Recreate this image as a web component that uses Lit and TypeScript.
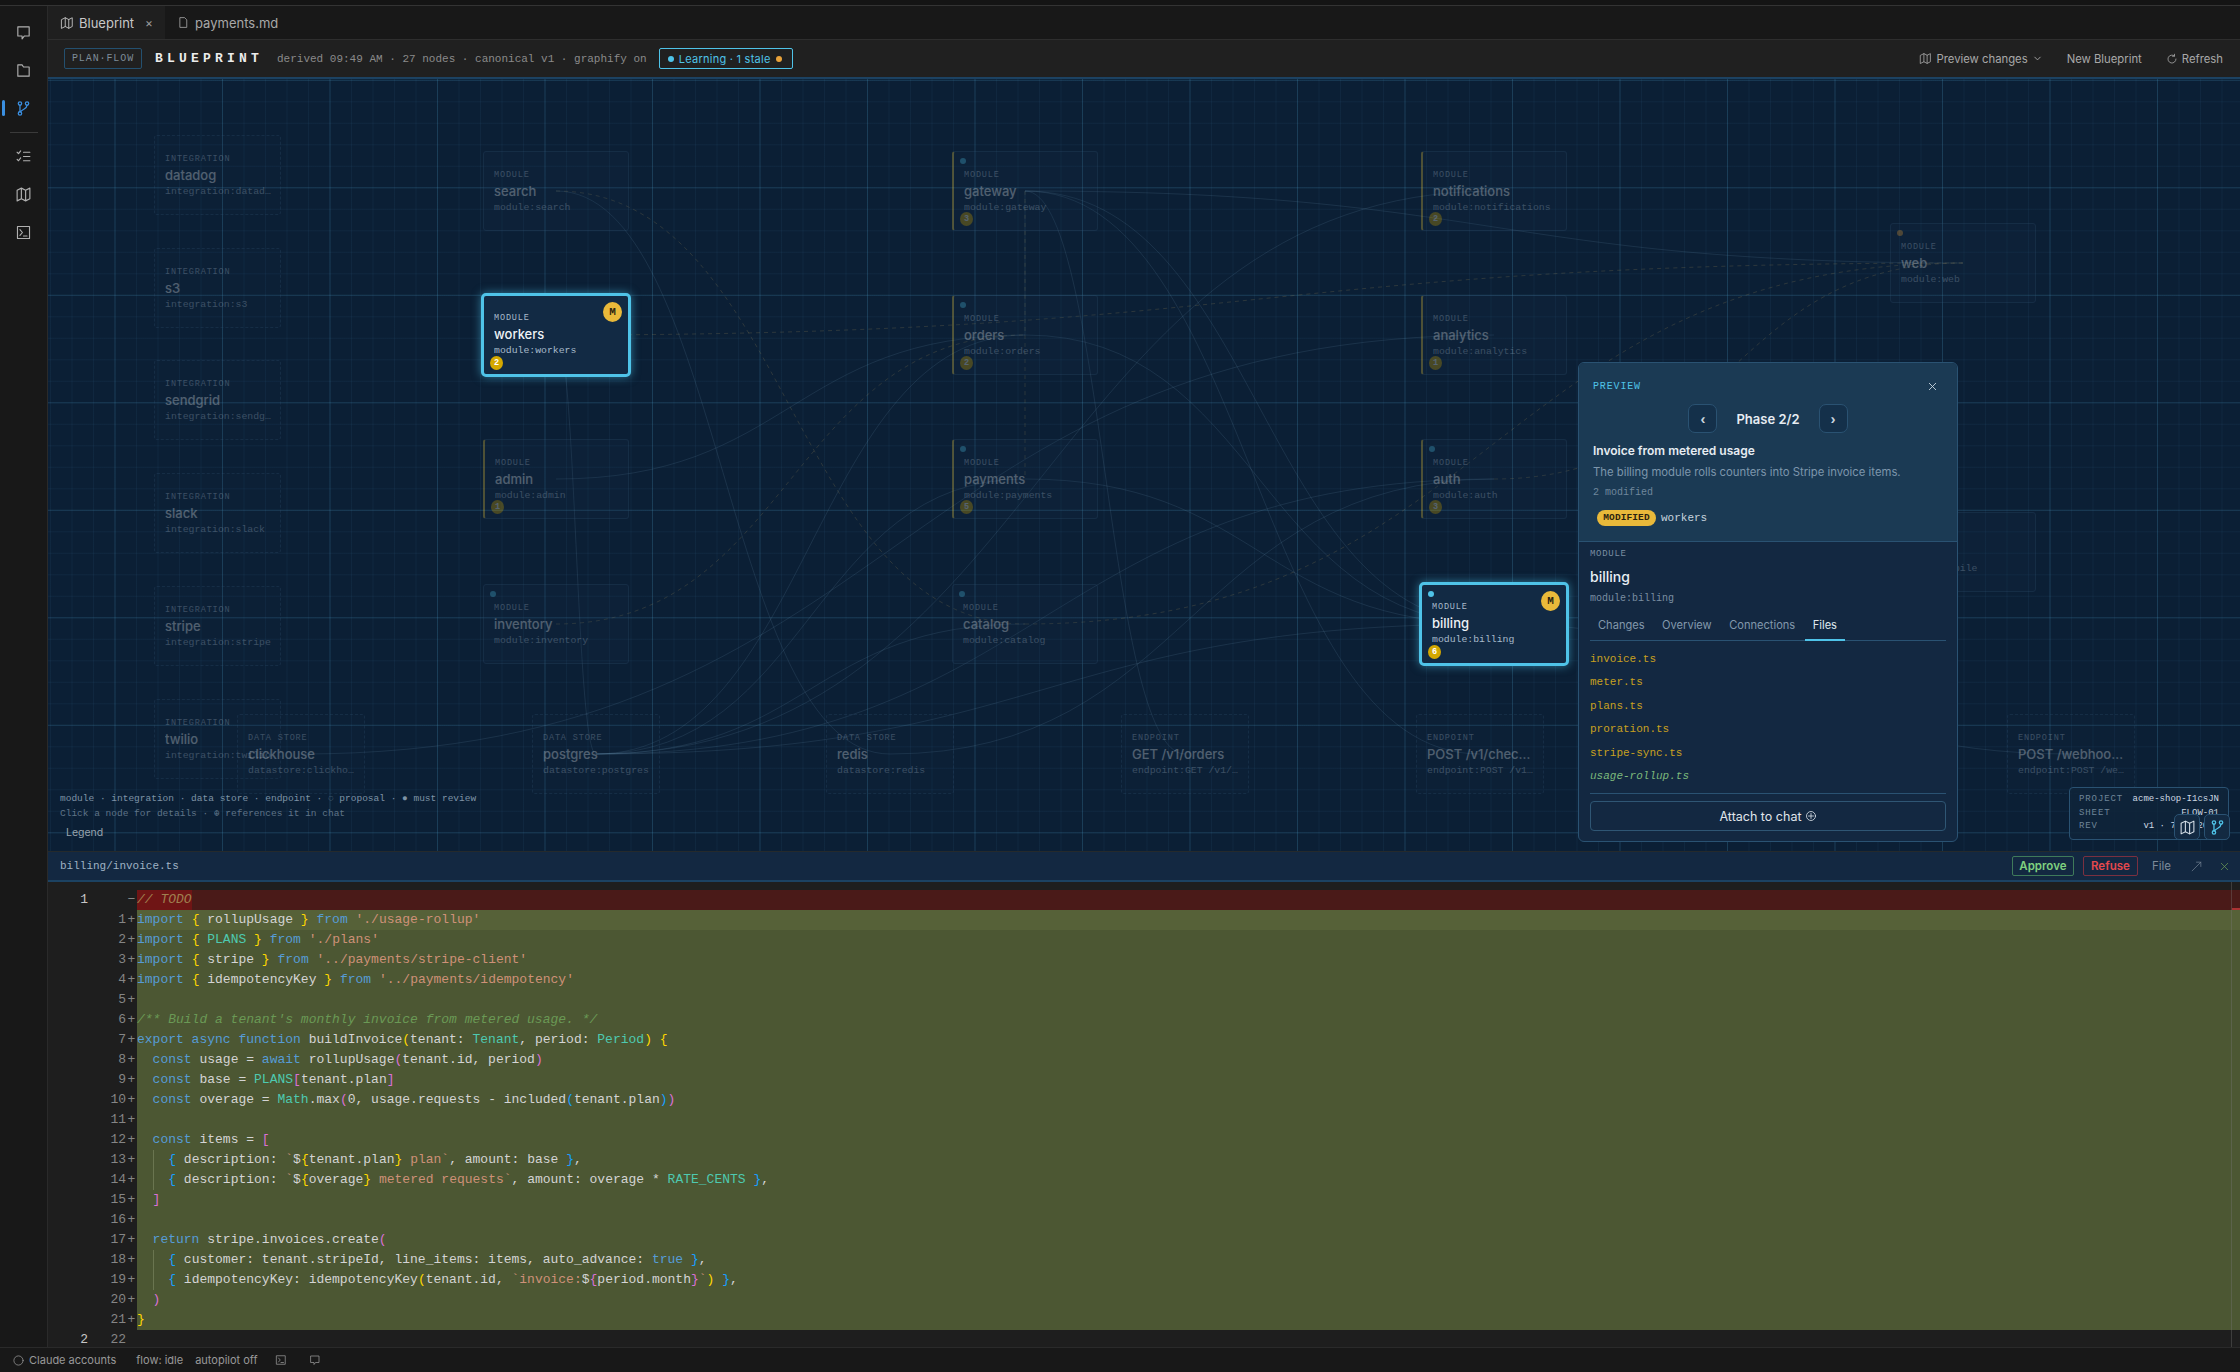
import { LitElement, html, css, svg, nothing } from "lit";
import { customElement } from "lit/decorators.js";

/** Canvas origin in page coordinates. */
const OX = 48;
const OY = 79;

type Kind = "module" | "integration" | "store" | "endpoint";

interface GraphNode {
  id: string;
  kind: Kind;
  x: number;
  y: number;
  name: string;
  ref: string;
  dot?: string;
  warn?: boolean;
  badge?: string;
  selected?: boolean;
}

const mod = (id: string, x: number, y: number, extra: Partial<GraphNode> = {}): GraphNode => ({
  id, kind: "module", x, y, name: id, ref: `module:${id}`, ...extra,
});
const integ = (id: string, y: number): GraphNode => ({
  id, kind: "integration", x: 154, y, name: id, ref: `integration:${id}`,
});
const store = (id: string, x: number): GraphNode => ({
  id, kind: "store", x, y: 714, name: id, ref: `datastore:${id}`,
});
const endpoint = (id: string, x: number, name: string): GraphNode => ({
  id, kind: "endpoint", x, y: 714, name, ref: `endpoint:${name}`,
});

const NODES: GraphNode[] = [
  integ("datadog", 135),
  integ("s3", 248),
  integ("sendgrid", 360),
  integ("slack", 473),
  integ("stripe", 586),
  integ("twilio", 699),
  mod("search", 483, 151),
  mod("workers", 483, 295, { selected: true, badge: "2", warn: false }),
  mod("admin", 483, 439, { warn: true, badge: "1" }),
  mod("inventory", 483, 584, { dot: "#4fc3e8" }),
  mod("gateway", 952, 151, { dot: "#4fc3e8", warn: true, badge: "3" }),
  mod("orders", 952, 295, { dot: "#4fc3e8", warn: true, badge: "2" }),
  mod("payments", 952, 439, { dot: "#4fc3e8", warn: true, badge: "5" }),
  mod("catalog", 952, 584, { dot: "#4fc3e8" }),
  mod("notifications", 1421, 151, { warn: true, badge: "2" }),
  mod("analytics", 1421, 295, { warn: true, badge: "1" }),
  mod("auth", 1421, 439, { dot: "#4fc3e8", warn: true, badge: "3" }),
  mod("billing", 1421, 584, { dot: "#4fc3e8", selected: true, badge: "6" }),
  mod("web", 1890, 223, { dot: "#e9a23a" }),
  mod("mobile", 1890, 512),
  store("clickhouse", 237),
  store("postgres", 532),
  store("redis", 826),
  endpoint("orders-get", 1121, "GET /v1/orders"),
  endpoint("checkout", 1416, "POST /v1/checkout"),
  endpoint("webhook", 2007, "POST /webhooks/stripe"),
];

/** from, to, dashed */
const EDGES: [string, string, boolean][] = [
  ["search", "redis", false],
  ["search", "catalog", true],
  ["workers", "web", true],
  ["workers", "postgres", false],
  ["admin", "orders", false],
  ["inventory", "orders", true],
  ["gateway", "orders", false],
  ["gateway", "payments", true],
  ["gateway", "web", false],
  ["gateway", "checkout", false],
  ["gateway", "orders-get", false],
  ["orders", "postgres", false],
  ["orders", "billing", false],
  ["payments", "postgres", false],
  ["payments", "billing", false],
  ["catalog", "postgres", false],
  ["catalog", "web", true],
  ["notifications", "postgres", false],
  ["analytics", "clickhouse", false],
  ["auth", "postgres", false],
  ["auth", "redis", false],
  ["billing", "postgres", false],
  ["billing", "webhook", false],
  ["billing", "gateway", false],
  ["auth", "web", true],
];

const nodeBox = (n: GraphNode) => ({
  w: n.kind === "module" ? 146 : n.kind === "integration" ? 127 : 128,
  h: 80,
});

const edgePath = (a: GraphNode, b: GraphNode) => {
  const x1 = a.x + nodeBox(a).w / 2 - OX;
  const y1 = a.y + 40 - OY;
  const x2 = b.x + nodeBox(b).w / 2 - OX;
  const y2 = b.y + 40 - OY;
  const mx = (x1 + x2) / 2;
  return `M${x1} ${y1}C${mx} ${y1} ${mx} ${y2} ${x2} ${y2}`;
};

const icons = {
  chat: svg`<path d="M4 4h16v13h-7l-3 4v-4H4z"/>`,
  folder: svg`<path d="M4 4h6l2 3h8v13H4z"/>`,
  branch: svg`<circle cx="7" cy="5" r="2.4"/><circle cx="17" cy="5" r="2.4"/><circle cx="7" cy="19" r="2.4"/><path d="M7 7.4v9.2M17 7.4c0 5-6 5-9.5 9.4"/>`,
  tasks: svg`<path d="m3 6 2 2 3-4M3 16l2 2 3-4M12 6h9M12 12h9M12 18h9"/>`,
  map: svg`<path d="M3 6l6-3 6 3 6-3v15l-6 3-6-3-6 3zM9 3v15M15 6v15"/>`,
  term: svg`<rect x="3.5" y="3.5" width="17" height="17"/><path d="m7 8 3.5 4L7 16M12 17h5"/>`,
  file: svg`<path d="M6 3h8l4 4v14H6z"/>`,
  down: svg`<path d="m6 9 6 6 6-6"/>`,
  refresh: svg`<path d="M20 12a8 8 0 1 1-3-6.2M17 2.5v4h-4"/>`,
  close: svg`<path d="M5 5l14 14M19 5 5 19"/>`,
  expand: svg`<path d="M4 20 20 4M12 4h8v8"/>`,
  plus: svg`<circle cx="12" cy="12" r="9"/><path d="M12 7v10M7 12h10"/>`,
  ring: svg`<circle cx="12" cy="12" r="8.5"/>`,
};

const icon = (name: keyof typeof icons, size = 16, stroke = 1.6) => html`<svg
  class="ic"
  width=${size}
  height=${size}
  viewBox="0 0 24 24"
  fill="none"
  stroke="currentColor"
  stroke-width=${stroke}
  stroke-linecap="round"
  stroke-linejoin="round"
>${icons[name]}</svg>`;

type Tok = string | [string, string];

const K = (t: string): Tok => ["k", t];
const S = (t: string): Tok => ["s", t];
const T = (t: string): Tok => ["t", t];
const Y = (t: string): Tok => ["y", t];
const P = (t: string): Tok => ["p", t];
const B = (t: string): Tok => ["b", t];
const D = (t: string): Tok => ["d", t];

/** Diff rows after the removed line. */
const ADDED: { toks: Tok[]; guide?: boolean }[] = [
  { toks: [K("import"), " ", Y("{"), " rollupUsage ", Y("}"), " ", K("from"), " ", S("'./usage-rollup'")] },
  { toks: [K("import"), " ", Y("{"), " ", T("PLANS"), " ", Y("}"), " ", K("from"), " ", S("'./plans'")] },
  { toks: [K("import"), " ", Y("{"), " stripe ", Y("}"), " ", K("from"), " ", S("'../payments/stripe-client'")] },
  { toks: [K("import"), " ", Y("{"), " idempotencyKey ", Y("}"), " ", K("from"), " ", S("'../payments/idempotency'")] },
  { toks: [] },
  { toks: [["c", "/** Build a tenant's monthly invoice from metered usage. */"]] },
  { toks: [K("export async function"), " buildInvoice", Y("("), "tenant: ", T("Tenant"), ", period: ", T("Period"), Y(")"), " ", Y("{")] },
  { toks: ["  ", K("const"), " usage = ", K("await"), " rollupUsage", P("("), "tenant.id, period", P(")")] },
  { toks: ["  ", K("const"), " base = ", T("PLANS"), P("["), "tenant.plan", P("]")] },
  { toks: ["  ", K("const"), " overage = ", T("Math"), ".max", P("("), "0, usage.requests - included", B("("), "tenant.plan", B(")"), P(")")] },
  { toks: [] },
  { toks: ["  ", K("const"), " items = ", P("[")] },
  { guide: true, toks: ["    ", B("{"), " description: ", S("`"), D("$"), Y("{"), "tenant.plan", Y("}"), " ", S("plan`"), ", amount: base ", B("}"), ","] },
  { guide: true, toks: ["    ", B("{"), " description: ", S("`"), D("$"), Y("{"), "overage", Y("}"), " ", S("metered requests`"), ", amount: overage * ", T("RATE_CENTS"), " ", B("}"), ","] },
  { toks: ["  ", P("]")] },
  { toks: [] },
  { toks: ["  ", K("return"), " stripe.invoices.create", P("(")] },
  { guide: true, toks: ["    ", B("{"), " customer: tenant.stripeId, line_items: items, auto_advance: ", K("true"), " ", B("}"), ","] },
  { guide: true, toks: ["    ", B("{"), " idempotencyKey: idempotencyKey", Y("("), "tenant.id, ", S("`invoice:"), D("$"), P("{"), "period.month", P("}"), S("`"), Y(")"), " ", B("}"), ","] },
  { toks: ["  ", P(")")] },
  { toks: [Y("}")] },
];

const FILES = ["invoice.ts", "meter.ts", "plans.ts", "proration.ts", "stripe-sync.ts"];

@customElement("app-root")
export class AppRoot extends LitElement {
  static styles = css`
    :host {
      display: grid;
      grid-template-columns: 48px 1fr;
      grid-template-rows: 6px 1fr 25px;
      width: 2240px;
      height: 1372px;
      overflow: hidden;
      background: #181818;
      color: #ccc;
      font-family: Inter, "Liberation Sans", sans-serif;
    }
    .ic {
      display: block;
      flex: none;
    }
    .mono {
      font-family: "Liberation Mono", "DejaVu Sans Mono", monospace;
    }

    .strip {
      grid-column: 1 / 3;
      background: #141414;
      border-bottom: 1px solid #333;
    }

    /* activity bar */
    .activity {
      display: flex;
      flex-direction: column;
      align-items: center;
      position: relative;
      border-right: 1px solid #2a2a2a;
      color: #b0b0b0;
      padding-top: 7px;
    }
    .activity .slot {
      height: 38px;
      display: flex;
      align-items: center;
      justify-content: center;
    }
    .activity .on {
      color: #3b8fe0;
    }
    .activity .bar {
      position: absolute;
      left: 2px;
      top: 94px;
      width: 3px;
      height: 16px;
      border-radius: 2px;
      background: #3b8fe0;
    }
    .activity hr {
      width: 28px;
      border: 0;
      border-top: 1px solid #3a3a3a;
      margin: 5px 0 4px;
    }

    .main {
      display: flex;
      flex-direction: column;
      min-width: 0;
      min-height: 0;
    }

    /* tabs */
    .tabs {
      height: 33px;
      flex: none;
      display: flex;
      background: #181818;
      border-bottom: 1px solid #2e2e2e;
      font-size: 13px;
      color: #a8a8a8;
    }
    .tab {
      display: flex;
      align-items: center;
      gap: 5px;
      padding: 0 11px 0 12px;
    }
    .tab.active {
      background: #1f1f1f;
      color: #c8c8c8;
      width: 117px;
      box-sizing: border-box;
    }
    .tab .x {
      margin-left: 6px;
      font-size: 12px;
      color: #999;
    }
    .tab.second {
      padding-left: 12px;
    }

    /* blueprint header */
    .head {
      height: 39px;
      flex: none;
      box-sizing: border-box;
      display: flex;
      align-items: center;
      background: #202020;
      border-bottom: 2px solid #1c4262;
      padding: 0 17px 0 16px;
    }
    .stamp {
      box-sizing: border-box;
      height: 21px;
      width: 78px;
      display: flex;
      align-items: center;
      justify-content: center;
      border: 1px solid #24506f;
      border-radius: 2px;
      font-size: 10px;
      letter-spacing: 0.9px;
      color: #7e8c98;
    }
    .title {
      margin-left: 13px;
      width: 122px;
      font-size: 13px;
      font-weight: 700;
      letter-spacing: 4.2px;
      color: #ececec;
    }
    .meta {
      font-size: 11px;
      color: #8a8a8a;
      white-space: pre;
    }
    .learning {
      margin-left: 12px;
      box-sizing: border-box;
      height: 21px;
      width: 134px;
      display: flex;
      align-items: center;
      justify-content: space-between;
      padding: 0 10px 0 8px;
      border: 1.5px solid #4fc3e8;
      border-radius: 2px;
      font-size: 11px;
      letter-spacing: 0.25px;
      color: #4fc3e8;
    }
    .learning i {
      width: 6px;
      height: 6px;
      border-radius: 50%;
      background: #4fc3e8;
    }
    .learning i.warn {
      background: #e9a23a;
    }
    .actions {
      margin-left: auto;
      display: flex;
      align-items: center;
      font-size: 11.3px;
      color: #a8a8a8;
    }
    .actions span {
      display: flex;
      align-items: center;
      gap: 4px;
    }
    .actions .gap {
      margin-left: 24px;
    }

    /* canvas */
    .canvas {
      position: relative;
      flex: none;
      height: 772px;
      overflow: hidden;
      background-color: #0b1f35;
      background-image: linear-gradient(rgba(80, 170, 210, 0.17) 1px, transparent 1px),
        linear-gradient(90deg, rgba(80, 170, 210, 0.17) 1px, transparent 1px),
        linear-gradient(rgba(80, 150, 200, 0.07) 1px, transparent 1px),
        linear-gradient(90deg, rgba(80, 150, 200, 0.07) 1px, transparent 1px);
      background-size: 107.5px 107.5px, 107.5px 107.5px, 21.5px 21.5px, 21.5px 21.5px;
      background-position: 66.5px 0.8px, 66.5px 0.8px, 66.5px 0.8px, 66.5px 0.8px;
    }
    .edges {
      position: absolute;
      inset: 0;
      width: 100%;
      height: 100%;
    }
    .edges path {
      fill: none;
      stroke: rgba(130, 175, 210, 0.13);
      stroke-width: 1;
    }
    .edges path.dash {
      stroke: rgba(175, 150, 90, 0.2);
      stroke-dasharray: 4 4;
    }

    .node {
      position: absolute;
      box-sizing: border-box;
      height: 80px;
      padding: 18px 8px 0 10px;
      border: 1px solid #2f4d6c;
      border-radius: 3px;
      background: rgba(26, 52, 80, 0.45);
      opacity: 0.3;
    }
    .node.module {
      width: 146px;
    }
    .node.integration,
    .node.store,
    .node.endpoint {
      border-style: dashed;
      background: rgba(26, 52, 80, 0.25);
      width: 128px;
    }
    .node.integration {
      width: 127px;
    }
    .node.warn {
      border-left: 2px solid #e9c53a;
    }
    .node.selected {
      opacity: 1;
      margin: -2px;
      width: 150px;
      height: 84px;
      padding: 17px 10px 0;
      border: 3px solid #4fc3e8;
      border-radius: 5px;
      background: #122a44;
      box-shadow: 0 0 10px rgba(79, 195, 232, 0.55);
    }
    .node .lab {
      font-size: 8.5px;
      line-height: 11px;
      letter-spacing: 0.85px;
      color: #a8bacb;
      white-space: nowrap;
    }
    .node .nm {
      margin-top: 2px;
      font-size: 13px;
      line-height: 17px;
      font-weight: 500;
      color: #eef2f6;
      white-space: nowrap;
      overflow: hidden;
      text-overflow: ellipsis;
    }
    .node .rf {
      margin-top: 2px;
      font-size: 9.8px;
      line-height: 12px;
      color: #a8bacb;
      white-space: nowrap;
      overflow: hidden;
      text-overflow: ellipsis;
    }
    .node .dot {
      position: absolute;
      left: 6px;
      top: 6px;
      width: 6px;
      height: 6px;
      border-radius: 50%;
    }
    .node .count {
      position: absolute;
      left: 6px;
      top: 60px;
      width: 13px;
      height: 14px;
      border-radius: 50%;
      background: #d4a800;
      color: #fff;
      font-size: 8.5px;
      font-weight: 700;
      line-height: 14px;
      text-align: center;
    }
    .node .m {
      position: absolute;
      right: 6px;
      top: 6px;
      width: 19px;
      height: 20px;
      border-radius: 50%;
      background: #e9b93a;
      color: #2b2310;
      font-size: 11px;
      font-weight: 700;
      line-height: 20px;
      text-align: center;
    }

    .legend {
      position: absolute;
      left: 12px;
      top: 712px;
      font-size: 9.5px;
      line-height: 15px;
      color: #7e93a6;
      white-space: nowrap;
    }
    .legend .hint {
      color: #5f7488;
    }
    .legend .name {
      margin: 4px 0 0 6px;
      font-family: Inter, "Liberation Sans", sans-serif;
      font-size: 10.5px;
      color: #98a4ae;
    }

    /* preview panel */
    .panel {
      position: absolute;
      left: 1530px;
      top: 283px;
      width: 380px;
      height: 480px;
      box-sizing: border-box;
      display: flex;
      flex-direction: column;
      border: 1px solid #2a5272;
      border-radius: 6px;
      background: #132841;
      overflow: hidden;
    }
    .pv {
      height: 179px;
      flex: none;
      box-sizing: border-box;
      background: #1b3a54;
      border-bottom: 1px solid #2a5272;
      padding: 15px 14px 0;
    }
    .pv-top {
      display: flex;
      align-items: center;
      justify-content: space-between;
      height: 16px;
      padding-right: 5px;
      color: #c8d4de;
    }
    .pv-top b {
      font-weight: 400;
      font-size: 10px;
      letter-spacing: 0.85px;
      color: #4fc3e8;
    }
    .phase {
      display: flex;
      align-items: center;
      justify-content: center;
      gap: 19px;
      margin-top: 10px;
      font-size: 13px;
      font-weight: 600;
      color: #e6ecf2;
    }
    .phase button {
      box-sizing: border-box;
      width: 29px;
      height: 29px;
      padding: 0;
      border: 1px solid #2a5272;
      border-radius: 7px;
      background: #14304a;
      color: #c8d4de;
      font: 700 15px "Liberation Sans", sans-serif;
    }
    .pv h4 {
      margin: 9px 0 0;
      font-size: 12px;
      line-height: 17px;
      font-weight: 600;
      color: #e6ecf2;
    }
    .pv p {
      margin: 5px 0 0;
      font-size: 11.3px;
      line-height: 17px;
      color: #7d96ac;
      white-space: nowrap;
    }
    .pv .cnt {
      margin-top: 5px;
      font-size: 10px;
      line-height: 14px;
      color: #6f879c;
    }
    .pv .chg {
      display: flex;
      align-items: center;
      gap: 5px;
      margin: 10px 0 0 4px;
      font-size: 11px;
      color: #c7d3dd;
    }
    .pv .tag {
      box-sizing: border-box;
      width: 59px;
      height: 16px;
      border-radius: 8px;
      background: #e9b93a;
      color: #2b2310;
      font-size: 9.5px;
      font-weight: 700;
      line-height: 16px;
      text-align: center;
      letter-spacing: 0.1px;
    }
    .dt {
      flex: 1;
      display: flex;
      flex-direction: column;
      padding: 6px 11px 0;
    }
    .dt .lab {
      font-size: 9px;
      line-height: 12px;
      letter-spacing: 0.7px;
      color: #7a8ea1;
    }
    .dt .nm {
      margin-top: 8px;
      font-size: 14px;
      line-height: 18px;
      font-weight: 500;
      color: #e8eef4;
    }
    .dt .rf {
      margin-top: 7px;
      font-size: 10px;
      line-height: 12px;
      color: #7a8ea1;
    }
    .subtabs {
      display: flex;
      gap: 1.5px;
      margin-top: 7px;
      height: 29px;
      flex: none;
      box-sizing: border-box;
      border-bottom: 1px solid #2a5272;
      font-size: 11.1px;
      color: #8298ac;
    }
    .subtabs span {
      padding: 0 8px;
      line-height: 26px;
      height: 29px;
      box-sizing: border-box;
    }
    .subtabs .on {
      color: #dfe7ee;
      border-bottom: 2px solid #4fc3e8;
    }
    .files {
      margin-top: 7px;
      font-size: 11px;
      line-height: 23.4px;
      color: #c8a020;
    }
    .files .new {
      color: #7cb87c;
      font-style: italic;
    }
    .attach-rule {
      margin-top: 5px;
      border-top: 1px solid #2a5272;
    }
    .attach {
      box-sizing: border-box;
      margin-top: 7px;
      height: 30px;
      display: flex;
      align-items: center;
      justify-content: center;
      gap: 3px;
      border: 1px solid #2f5674;
      border-radius: 4px;
      font-size: 12.5px;
      color: #e0e6ec;
    }

    /* title block */
    .sheet {
      position: absolute;
      left: 2021px;
      top: 708px;
      width: 160px;
      height: 53px;
      box-sizing: border-box;
      padding: 5px 9px;
      border: 1px solid #2a5272;
      border-radius: 4px;
      background: rgba(15, 36, 58, 0.85);
      font-size: 9px;
      line-height: 13.5px;
      color: #cdd8e2;
    }
    .sheet div {
      display: flex;
      justify-content: space-between;
    }
    .sheet em {
      font-style: normal;
      letter-spacing: 0.9px;
      color: #6f8598;
    }
    .mini {
      position: absolute;
      top: 735px;
      box-sizing: border-box;
      width: 26px;
      height: 26px;
      display: flex;
      align-items: center;
      justify-content: center;
      border: 1px solid #2a5272;
      border-radius: 5px;
      background: #132a42;
      color: #d6e0e8;
    }
    .mini.a {
      left: 2126px;
    }
    .mini.b {
      left: 2156px;
      color: #4fc3e8;
    }

    /* file bar */
    .filebar {
      height: 31px;
      flex: none;
      box-sizing: border-box;
      display: flex;
      align-items: center;
      padding: 0 10px 0 12px;
      background: #132841;
      border-top: 1px solid #252a2c;
      border-bottom: 2px solid #1c4262;
      font-size: 11px;
      color: #9fb2c4;
    }
    .filebar .right {
      margin-left: auto;
      display: flex;
      align-items: center;
      font-family: Inter, "Liberation Sans", sans-serif;
      font-size: 11.5px;
      color: #7d8b9a;
    }
    .pill {
      box-sizing: border-box;
      height: 20px;
      line-height: 18px;
      border-radius: 2px;
      font-weight: 600;
      text-align: center;
    }
    .pill.ok {
      width: 62px;
      border: 1px solid #3f7a5a;
      color: #7fd07f;
    }
    .pill.no {
      width: 55px;
      margin-left: 9px;
      border: 1px solid #7a3040;
      color: #e5484d;
    }
    .filebar .f {
      margin: 0 19px 0 14px;
    }
    .filebar .c {
      margin-left: 16px;
    }

    /* diff */
    .editor {
      flex: 1;
      position: relative;
      min-height: 0;
      padding-top: 8px;
      background: #1e1e1e;
      font-size: 13px;
      line-height: 20px;
      color: #d4d4d4;
      overflow: hidden;
    }
    .row {
      display: flex;
      height: 20px;
      white-space: pre;
    }
    .row .old {
      width: 40px;
      text-align: right;
      color: #c6c6c6;
    }
    .row .new {
      width: 38px;
      text-align: right;
      color: #858585;
    }
    .row .sg {
      width: 11px;
      text-align: center;
      color: #858585;
    }
    .row .code {
      flex: 1;
      position: relative;
      background: #4c5733;
    }
    .row.first .code {
      background: #566138;
    }
    .row.del .code {
      background: #4a1a18;
      color: #9a7a5a;
    }
    .row.plain .code {
      background: transparent;
    }
    .row .hit {
      display: inline-block;
      background: #6f1515;
      font-style: italic;
      color: #a08050;
    }
    .guide::before {
      content: "";
      position: absolute;
      left: 16px;
      top: 0;
      bottom: 0;
      border-left: 1px solid #6a7550;
    }
    .k { color: #569cd6; }
    .s { color: #ce9178; }
    .t { color: #4ec9b0; }
    .y { color: #ffd700; }
    .p { color: #da70d6; }
    .b { color: #179fff; }
    .d { color: #d4d4d4; }
    .c { color: #6a9955; font-style: italic; }
    .ruler {
      position: absolute;
      right: 0;
      top: 0;
      bottom: 0;
      width: 8px;
      border-left: 1px solid rgba(120, 120, 120, 0.35);
    }
    .ruler i {
      position: absolute;
      left: 0;
      right: 0;
      top: 26px;
      height: 2px;
      background: #a33;
    }

    /* status */
    .status {
      grid-column: 1 / 3;
      display: flex;
      align-items: center;
      padding-left: 12px;
      border-top: 1px solid #2a2a2a;
      font-size: 11px;
      color: #989898;
    }
    .status .ic:first-child {
      margin-right: 4px;
    }
    .status .fl {
      margin-left: 20px;
    }
    .status .ap {
      margin-left: 12px;
    }
    .status .i1 {
      margin-left: 17px;
    }
    .status .i2 {
      margin-left: 18px;
    }
  `;

  private _node(n: GraphNode) {
    const cls = ["node", n.kind, n.warn ? "warn" : "", n.selected ? "selected" : ""].join(" ");
    const label = n.kind === "store" ? "DATA STORE" : n.kind.toUpperCase();
    return html`<div class=${cls} style="left:${n.x - OX}px;top:${n.y - OY}px">
      ${n.dot ? html`<span class="dot" style="background:${n.dot}"></span>` : nothing}
      ${n.selected ? html`<span class="m mono">M</span>` : nothing}
      <div class="lab mono">${label}</div>
      <div class="nm">${n.name}</div>
      <div class="rf mono">${n.ref}</div>
      ${n.badge ? html`<span class="count mono">${n.badge}</span>` : nothing}
    </div>`;
  }

  private _canvas() {
    const byId = new Map(NODES.map((n) => [n.id, n]));
    return html`<div class="canvas">
      <svg class="edges">
        ${EDGES.map(([a, b, dashed]) => {
          const from = byId.get(a)!;
          const to = byId.get(b)!;
          return svg`<path class=${dashed ? "dash" : ""} d=${edgePath(from, to)}></path>`;
        })}
      </svg>
      ${NODES.map((n) => this._node(n))}
      <div class="legend mono">
        <div>module · integration · data store · endpoint · ◌ proposal · ● must review</div>
        <div class="hint">Click a node for details · ⊕ references it in chat</div>
        <div class="name">Legend</div>
      </div>
      ${this._panel()}
      <div class="sheet mono">
        <div><em>PROJECT</em><span>acme-shop-I1csJN</span></div>
        <div><em>SHEET</em><span>FLOW-01</span></div>
        <div><em>REV</em><span>v1 · 7/14/2026</span></div>
      </div>
      <div class="mini a">${icon("map", 17, 1.5)}</div>
      <div class="mini b">${icon("branch", 17, 1.8)}</div>
    </div>`;
  }

  private _panel() {
    return html`<aside class="panel">
      <div class="pv">
        <div class="pv-top"><b class="mono">PREVIEW</b>${icon("close", 11, 2)}</div>
        <div class="phase"><button>‹</button><span>Phase 2/2</span><button>›</button></div>
        <h4>Invoice from metered usage</h4>
        <p>The billing module rolls counters into Stripe invoice items.</p>
        <div class="cnt mono">2 modified</div>
        <div class="chg mono"><span class="tag">MODIFIED</span>workers</div>
      </div>
      <div class="dt">
        <div class="lab mono">MODULE</div>
        <div class="nm">billing</div>
        <div class="rf mono">module:billing</div>
        <div class="subtabs">
          <span>Changes</span><span>Overview</span><span>Connections</span><span class="on">Files</span>
        </div>
        <div class="files mono">
          ${FILES.map((f) => html`<div>${f}</div>`)}
          <div class="new">usage-rollup.ts</div>
        </div>
        <div class="attach-rule"></div>
        <div class="attach">Attach to chat ${icon("plus", 12, 1.6)}</div>
      </div>
    </aside>`;
  }

  private _tokens(toks: Tok[]) {
    return toks.map((t) => (typeof t === "string" ? t : html`<span class=${t[0]}>${t[1]}</span>`));
  }

  private _editor() {
    return html`<div class="editor mono">
      <div class="row del">
        <span class="old">1</span><span class="new"></span><span class="sg">−</span>
        <span class="code"><span class="hit">// TODO</span></span>
      </div>
      ${ADDED.map(
        (r, i) => html`<div class="row ${i === 0 ? "first" : ""}">
          <span class="old"></span><span class="new">${i + 1}</span><span class="sg">+</span>
          <span class="code ${r.guide ? "guide" : ""}">${this._tokens(r.toks)}</span>
        </div>`
      )}
      <div class="row plain">
        <span class="old">2</span><span class="new">22</span><span class="sg"></span><span class="code"></span>
      </div>
      <div class="ruler"><i></i></div>
    </div>`;
  }

  render() {
    return html`
      <div class="strip"></div>
      <nav class="activity">
        <div class="slot">${icon("chat", 17)}</div>
        <div class="slot">${icon("folder", 17)}</div>
        <div class="slot on">${icon("branch", 17, 1.8)}</div>
        <span class="bar"></span>
        <hr />
        <div class="slot">${icon("tasks", 17)}</div>
        <div class="slot">${icon("map", 17)}</div>
        <div class="slot">${icon("term", 17)}</div>
      </nav>
      <div class="main">
        <div class="tabs">
          <div class="tab active">${icon("map", 14, 1.5)}Blueprint<span class="x">×</span></div>
          <div class="tab second">${icon("file", 13, 1.5)}payments.md</div>
        </div>
        <header class="head">
          <span class="stamp mono">PLAN·FLOW</span>
          <span class="title mono">BLUEPRINT</span>
          <span class="meta mono">derived 09:49 AM · 27 nodes · canonical v1 · graphify on</span>
          <span class="learning"><i></i>Learning · 1 stale<i class="warn"></i></span>
          <div class="actions">
            <span>${icon("map", 13, 1.5)}Preview changes ${icon("down", 11, 2)}</span>
            <span class="gap">New Blueprint</span>
            <span class="gap">${icon("refresh", 12, 1.6)}Refresh</span>
          </div>
        </header>
        ${this._canvas()}
        <div class="filebar mono">
          billing/invoice.ts
          <div class="right">
            <span class="pill ok">Approve</span>
            <span class="pill no">Refuse</span>
            <span class="f">File</span>
            ${icon("expand", 13, 1.2)}
            <span class="c">${icon("close", 11, 1.6)}</span>
          </div>
        </div>
        ${this._editor()}
      </div>
      <footer class="status">
        ${icon("ring", 13, 1.4)}<span>Claude accounts</span>
        <span class="fl">flow: idle</span>
        <span class="ap">autopilot off</span>
        <span class="i1">${icon("term", 12, 1.5)}</span>
        <span class="i2">${icon("chat", 12, 1.5)}</span>
      </footer>
    `;
  }
}
